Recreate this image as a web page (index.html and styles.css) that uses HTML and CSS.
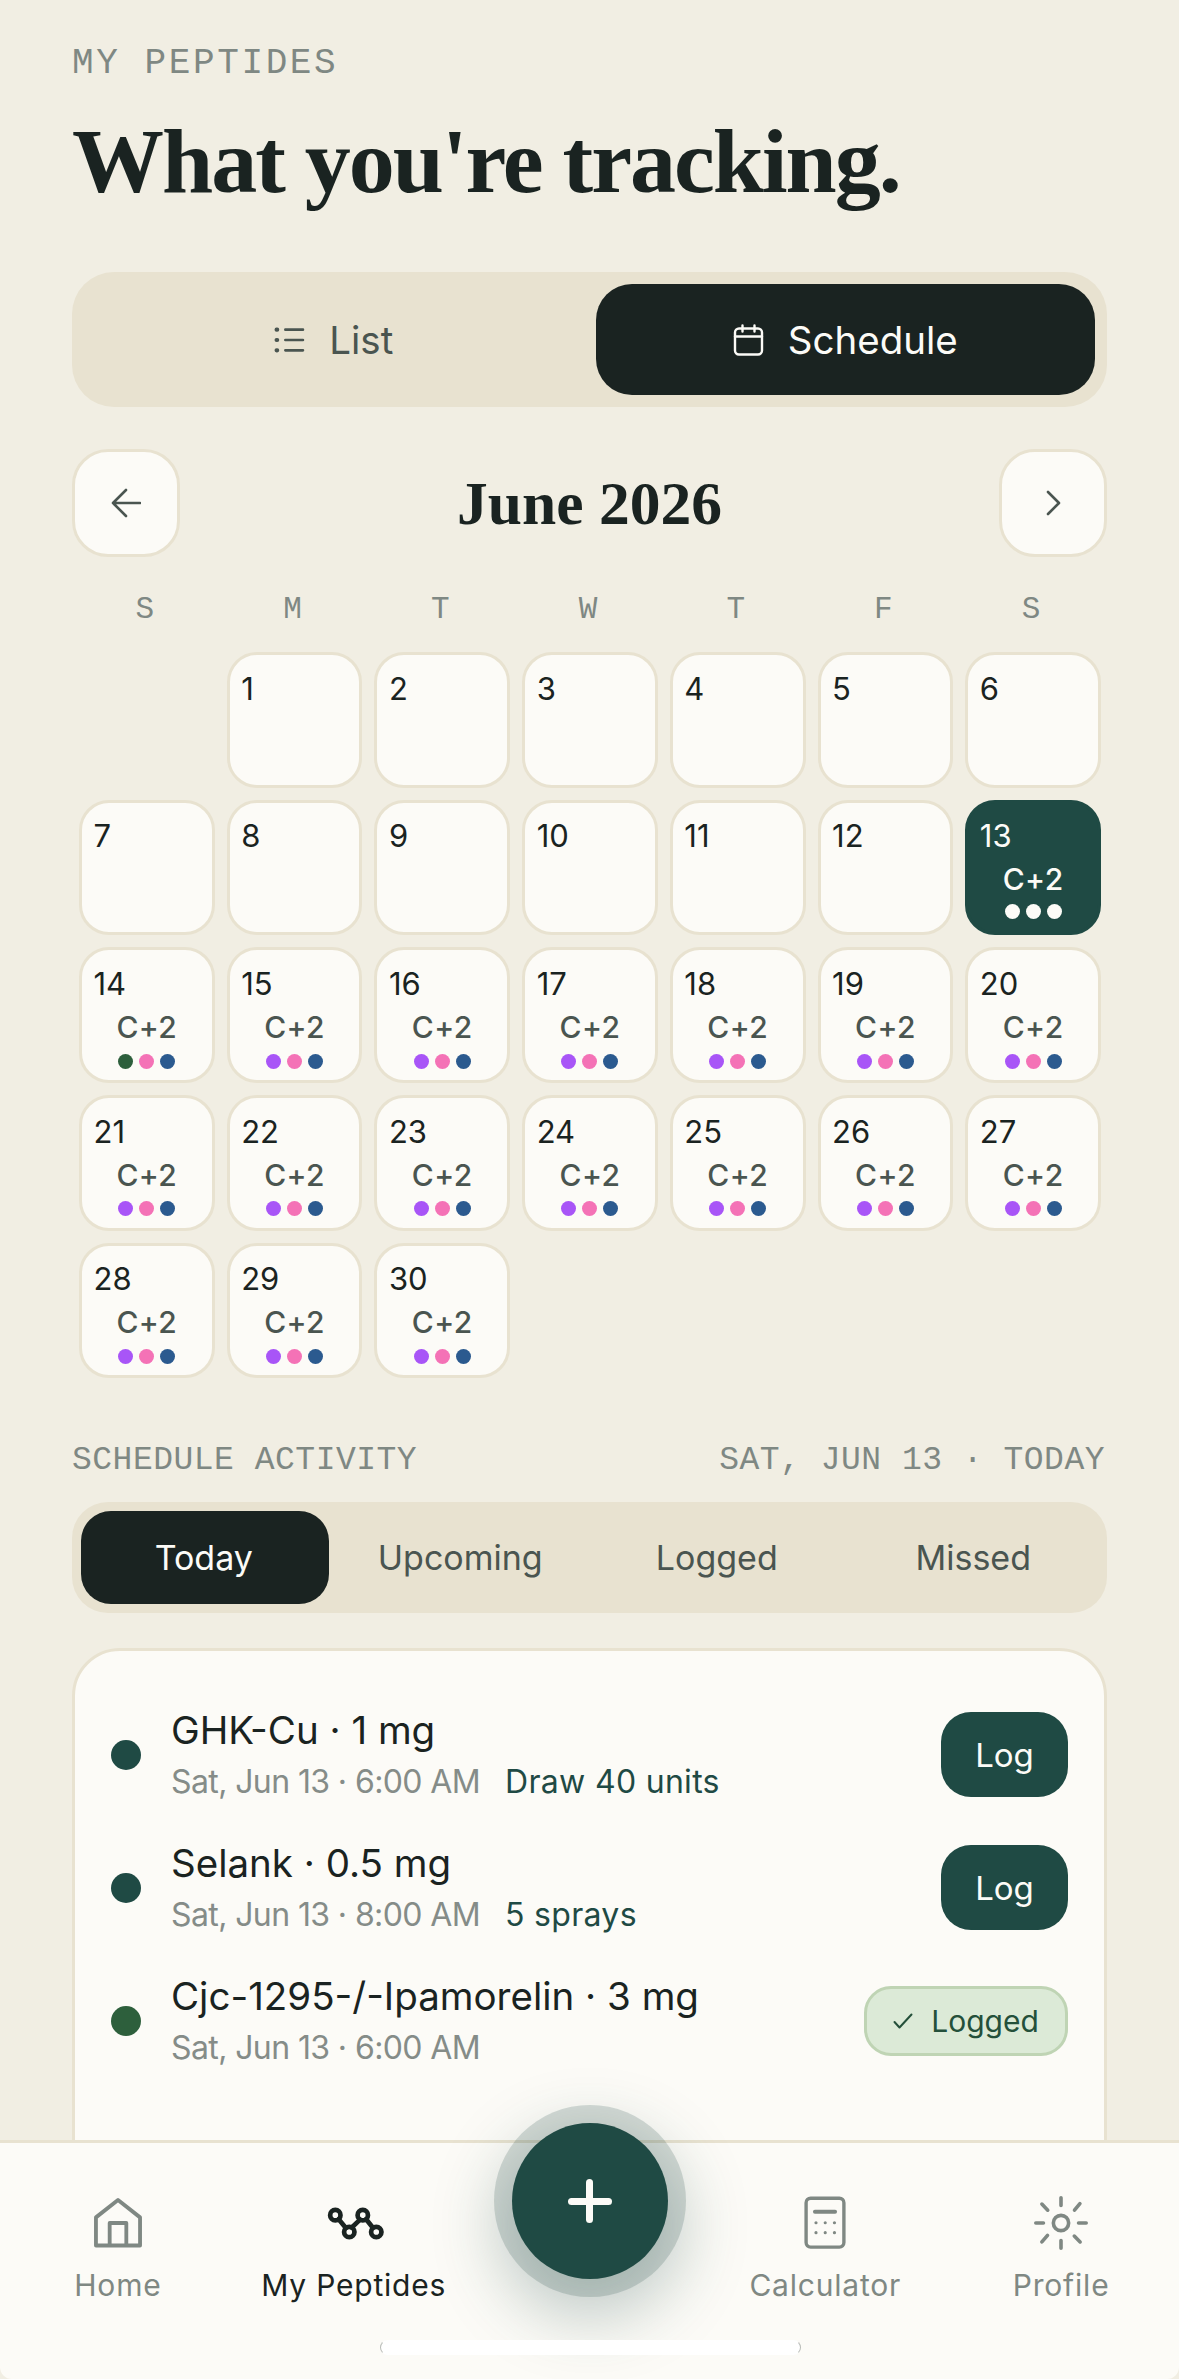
FILE: index.html
```html
<!DOCTYPE html>
<html lang="en">
<head>
<meta charset="utf-8">
<title>My Peptides</title>
<link rel="stylesheet" href="styles.css">
</head>
<body>
<div class="screen">
  <p class="eyebrow">MY PEPTIDES</p>
  <h1 class="title">What you're tracking.</h1>

  <div class="view-toggle">
    <div class="view-opt">
      <svg class="view-icon" viewBox="0 0 30 30" fill="none" stroke="currentColor" stroke-width="2.6" stroke-linecap="round"><path d="M11 5h17M11 15h17M11 25h17"/><path d="M2.5 5h.6M2.5 15h.6M2.5 25h.6" stroke-width="4"/></svg>
      <span>List</span>
    </div>
    <div class="view-opt is-active">
      <svg class="view-icon" viewBox="0 0 30 32" fill="none" stroke="currentColor" stroke-width="2.4" stroke-linecap="round" stroke-linejoin="round"><rect x="1.5" y="4.5" width="27" height="26" rx="4"/><path d="M1.5 12.5h27M9 1.5v6M21 1.5v6"/></svg>
      <span>Schedule</span>
    </div>
  </div>

  <div class="month-nav">
    <button class="nav-btn"><svg class="nav-svg" viewBox="0 0 30 30" fill="none" stroke="#4a5550" stroke-width="2.6" stroke-linecap="round" stroke-linejoin="round"><path d="M29 15H2M15 2 2 15l13 13"/></svg></button>
    <h2 class="month">June 2026</h2>
    <button class="nav-btn"><svg class="nav-svg" viewBox="0 0 30 30" fill="none" stroke="#4a5550" stroke-width="2.6" stroke-linecap="round" stroke-linejoin="round"><path d="m10 4 11 11-11 11"/></svg></button>
  </div>

  <div class="weekdays"><span>S</span><span>M</span><span>T</span><span>W</span><span>T</span><span>F</span><span>S</span></div>

  <div class="cal">
    <div class="blank"></div>
    <div class="day"><span class="num">1</span></div>
    <div class="day"><span class="num">2</span></div>
    <div class="day"><span class="num">3</span></div>
    <div class="day"><span class="num">4</span></div>
    <div class="day"><span class="num">5</span></div>
    <div class="day"><span class="num">6</span></div>
    <div class="day"><span class="num">7</span></div>
    <div class="day"><span class="num">8</span></div>
    <div class="day"><span class="num">9</span></div>
    <div class="day"><span class="num">10</span></div>
    <div class="day"><span class="num">11</span></div>
    <div class="day"><span class="num">12</span></div>
    <div class="day today"><span class="num">13</span><span class="count">C+2</span><span class="dots"><i class="w"></i><i class="w"></i><i class="w"></i></span></div>
    <div class="day"><span class="num">14</span><span class="count">C+2</span><span class="dots"><i class="g"></i><i class="k"></i><i class="b"></i></span></div>
    <div class="day"><span class="num">15</span><span class="count">C+2</span><span class="dots"><i class="p"></i><i class="k"></i><i class="b"></i></span></div>
    <div class="day"><span class="num">16</span><span class="count">C+2</span><span class="dots"><i class="p"></i><i class="k"></i><i class="b"></i></span></div>
    <div class="day"><span class="num">17</span><span class="count">C+2</span><span class="dots"><i class="p"></i><i class="k"></i><i class="b"></i></span></div>
    <div class="day"><span class="num">18</span><span class="count">C+2</span><span class="dots"><i class="p"></i><i class="k"></i><i class="b"></i></span></div>
    <div class="day"><span class="num">19</span><span class="count">C+2</span><span class="dots"><i class="p"></i><i class="k"></i><i class="b"></i></span></div>
    <div class="day"><span class="num">20</span><span class="count">C+2</span><span class="dots"><i class="p"></i><i class="k"></i><i class="b"></i></span></div>
    <div class="day"><span class="num">21</span><span class="count">C+2</span><span class="dots"><i class="p"></i><i class="k"></i><i class="b"></i></span></div>
    <div class="day"><span class="num">22</span><span class="count">C+2</span><span class="dots"><i class="p"></i><i class="k"></i><i class="b"></i></span></div>
    <div class="day"><span class="num">23</span><span class="count">C+2</span><span class="dots"><i class="p"></i><i class="k"></i><i class="b"></i></span></div>
    <div class="day"><span class="num">24</span><span class="count">C+2</span><span class="dots"><i class="p"></i><i class="k"></i><i class="b"></i></span></div>
    <div class="day"><span class="num">25</span><span class="count">C+2</span><span class="dots"><i class="p"></i><i class="k"></i><i class="b"></i></span></div>
    <div class="day"><span class="num">26</span><span class="count">C+2</span><span class="dots"><i class="p"></i><i class="k"></i><i class="b"></i></span></div>
    <div class="day"><span class="num">27</span><span class="count">C+2</span><span class="dots"><i class="p"></i><i class="k"></i><i class="b"></i></span></div>
    <div class="day"><span class="num">28</span><span class="count">C+2</span><span class="dots"><i class="p"></i><i class="k"></i><i class="b"></i></span></div>
    <div class="day"><span class="num">29</span><span class="count">C+2</span><span class="dots"><i class="p"></i><i class="k"></i><i class="b"></i></span></div>
    <div class="day"><span class="num">30</span><span class="count">C+2</span><span class="dots"><i class="p"></i><i class="k"></i><i class="b"></i></span></div>
  </div>

  <div class="section-head">
    <span>SCHEDULE ACTIVITY</span>
    <span>SAT, JUN 13 · TODAY</span>
  </div>

  <div class="tabs">
    <div class="tab is-active">Today</div>
    <div class="tab">Upcoming</div>
    <div class="tab">Logged</div>
    <div class="tab">Missed</div>
  </div>

  <div class="card">
    <div class="row">
      <span class="bullet"></span>
      <div class="row-text">
        <div class="row-title">GHK-Cu · 1 mg</div>
        <div class="row-sub"><span class="when">Sat, Jun 13 · 6:00 AM</span><span class="dose">Draw 40 units</span></div>
      </div>
      <div class="log-btn">Log</div>
    </div>
    <div class="row">
      <span class="bullet"></span>
      <div class="row-text">
        <div class="row-title">Selank · 0.5 mg</div>
        <div class="row-sub"><span class="when">Sat, Jun 13 · 8:00 AM</span><span class="dose">5 sprays</span></div>
      </div>
      <div class="log-btn">Log</div>
    </div>
    <div class="row">
      <span class="bullet done"></span>
      <div class="row-text">
        <div class="row-title">Cjc-1295-/-Ipamorelin · 3 mg</div>
        <div class="row-sub"><span class="when">Sat, Jun 13 · 6:00 AM</span></div>
      </div>
      <div class="logged-chip">
        <svg class="check" viewBox="0 0 20 16" fill="none" stroke="currentColor" stroke-width="2" stroke-linecap="round" stroke-linejoin="round"><path d="m1.5 9 5 5.500L18.500 1.500"/></svg>
        <span>Logged</span>
      </div>
    </div>
  </div>

  <nav class="tabbar">
    <div class="tabitem">
      <svg class="tabicon" viewBox="0 0 24 24" fill="none" stroke="currentColor" stroke-width="1.7" stroke-linejoin="round"><path d="M2.200 9.500 12 1.800l9.800 7.700V22H2.200z"/><path d="M8.300 22V12h7.400v10"/></svg>
      <span>Home</span>
    </div>
    <div class="tabitem is-current">
      <svg class="tabicon" viewBox="0 0 24 24" fill="none" stroke="currentColor" stroke-width="2.100" stroke-linecap="round"><circle cx="3.700" cy="8.500" r="2.300"/><circle cx="9.900" cy="16" r="2.300"/><circle cx="15.900" cy="8.500" r="2.300"/><circle cx="21.900" cy="16" r="2.300"/><path d="m5.200 10.300 3.200 3.900M11 14l3.700-3.500M17.400 10.300l3 3.800"/></svg>
      <span>My Peptides</span>
    </div>
    <div class="tabgap"></div>
    <div class="tabitem">
      <svg class="tabicon" viewBox="0 0 24 24" fill="none" stroke="currentColor" stroke-width="1.500" stroke-linecap="round"><rect x="3.600" y="1" width="16.800" height="21.700" rx="2"/><path d="M7.500 7h9" stroke-width="1.700"/><g fill="currentColor" stroke="none"><circle cx="8" cy="11.900" r=".7"/><circle cx="12.100" cy="11.900" r=".7"/><circle cx="16.200" cy="11.900" r=".7"/><circle cx="8" cy="16.300" r=".7"/><circle cx="12.100" cy="16.300" r=".7"/><circle cx="16.200" cy="16.300" r=".7"/></g></svg>
      <span>Calculator</span>
    </div>
    <div class="tabitem">
      <svg class="tabicon" viewBox="0 0 24 24" fill="none" stroke="currentColor" stroke-width="1.600" stroke-linecap="round"><circle cx="12" cy="12" r="3.400"/><path d="M12 .8v3.400M12 19.800v3.400M.8 12h3.400M19.800 12h3.400M3.500 3.600l2.600 2.700M17.900 17.800l2.600 2.600M3.500 20.400l2.500-2.900M18 6.300l2.400-2.900"/></svg>
      <span>Profile</span>
    </div>
    <button class="fab"><span class="fab-plus"></span></button>
    <div class="home-bar"></div>
  </nav>
</div>
</body>
</html>
```

FILE: styles.css
```css
* { box-sizing: border-box; }
html, body { margin: 0; padding: 0; }
body { background: #f1eee3; font-family: Inter, "Noto Sans", sans-serif; color: #1a2321; }

.screen { position: relative; width: 1179px; height: 2379px; overflow: hidden; padding: 44px 72px 0 72px; background: #f1eee3; }

.eyebrow { margin: 0; font: 400 36px/40px "Liberation Mono", monospace; letter-spacing: 2.6px; color: #7f8883; }
.title { margin: 27px 0 0; font: 700 92px/100px "Liberation Serif", serif; letter-spacing: -2px; color: #1a2321; }

.view-toggle { margin-top: 61px; height: 135px; padding: 12px; border-radius: 42px; background: #e8e2d0; display: grid; grid-template-columns: 1fr 1fr; gap: 12px; }
.view-opt { display: flex; align-items: center; justify-content: center; gap: 24px; border-radius: 36px; font-size: 38.500px; color: #4a5550; }
.view-opt.is-active { background: #1a2321; color: #fcfbf7; }
.view-icon { width: 31px; height: 32px; }

.month-nav { margin-top: 42px; height: 108px; display: flex; align-items: center; justify-content: space-between; }
.nav-btn { width: 108px; height: 108px; padding: 0; border: 3px solid #e8e2d0; border-radius: 36px; background: #fcfbf7; display: flex; align-items: center; justify-content: center; }
.nav-svg { width: 30px; height: 30px; }
.month { margin: 0; font: 700 61.500px/70px "Liberation Serif", serif; color: #1a2321; }

.weekdays { margin-top: 38px; padding: 0 8px 0 5px; display: grid; grid-template-columns: repeat(7, 1fr); gap: 12px; font: 400 31px/30px "Liberation Mono", monospace; color: #7f8883; text-align: center; }

.cal { margin-top: 27px; padding: 0 6px 0 7px; display: grid; grid-template-columns: repeat(7, 1fr); grid-auto-rows: 135.700px; gap: 12px; }
.day { padding: 15.500px 11.500px; border: 3px solid #e8e2d0; border-radius: 30px; background: #fcfbf7; display: flex; flex-direction: column; align-items: flex-start; }
.num { font-size: 31px; line-height: 36px; color: #1a2321; }
.count { align-self: center; margin-top: 10px; font-size: 30px; font-weight: 500; line-height: 30px; letter-spacing: .4px; color: #4a5550; }
.dots { align-self: center; margin-top: 11.800px; display: flex; gap: 6px; }
.dots i { width: 15px; height: 15px; border-radius: 50%; }
.dots .p { background: #a855f7; }
.dots .k { background: #f472b6; }
.dots .b { background: #2b5a8f; }
.dots .g { background: #2d5f3c; }
.dots .w { background: #fcfbf7; }
.day.today { border-color: #1f4a44; background: #1f4a44; }
.today .num, .today .count { color: #fcfbf7; }
.today .dots { margin-top: 9.500px; }

.section-head { margin-top: 63px; padding-right: 2px; display: flex; justify-content: space-between; font: 400 33px/40px "Liberation Mono", monospace; letter-spacing: .5px; color: #7f8883; }

.tabs { margin-top: 21px; height: 111px; padding: 9px; border-radius: 36px; background: #e8e2d0; display: grid; grid-template-columns: repeat(4, 1fr); gap: 9px; }
.tab { padding-right: 2px; display: flex; align-items: center; justify-content: center; border-radius: 30px; font-size: 34px; color: #4a5550; }
.tab.is-active { background: #1a2321; color: #fcfbf7; }

.card { margin-top: 35px; height: 560px; padding: 55px 36px 0; border: 3px solid #e8e2d0; border-radius: 48px; background: #fcfbf7; display: flex; flex-direction: column; gap: 36px; }
.row { display: flex; align-items: center; gap: 30px; }
.bullet { width: 30px; height: 30px; border-radius: 50%; background: #1f4a44; flex: none; }
.bullet.done { background: #2d5f3c; }
.row-text { flex: 1; min-width: 0; }
.row-title { font-size: 38.500px; line-height: 48px; color: #1a2321; }
.row-sub { margin-top: 7px; display: flex; gap: 25px; font-size: 32px; line-height: 42px; color: #858c88; }
.when { letter-spacing: -.6px; }
.dose { color: #1f4a44; letter-spacing: .3px; }
.log-btn { width: 127px; height: 85px; border-radius: 30px; background: #1f4a44; color: #fcfbf7; font-size: 33px; display: flex; align-items: center; justify-content: center; }
.logged-chip { width: 204px; height: 70px; border: 3px solid #bfd4b4; border-radius: 27px; background: #dcead7; color: #24503a; font-size: 30px; display: flex; align-items: center; justify-content: center; gap: 18px; }
.check { width: 20px; height: 16px; }

.tabbar { position: absolute; left: 0; right: 0; bottom: 0; height: 239px; padding-top: 53px; border-top: 3px solid #e8e2d0; border-radius: 0 0 12px 12px; background: #fcfbf7; display: grid; grid-template-columns: repeat(5, 1fr); align-items: start; }
.tabitem { display: flex; flex-direction: column; align-items: center; gap: 15px; color: #7f8883; font-size: 30px; line-height: 40px; letter-spacing: .8px; }
.tabitem.is-current { color: #1a2321; }
.tabicon { width: 54px; height: 54px; overflow: visible; }

.fab { position: absolute; left: 511.500px; top: -20px; width: 156px; height: 156px; padding: 0; border: none; border-radius: 50%; background: #1f4a44; box-shadow: 0 0 0 18px rgba(31, 74, 68, .18), 0 24px 64px 16px rgba(31, 74, 68, .26); }
.fab-plus { position: absolute; left: 56px; top: 74.500px; width: 44px; height: 7px; border-radius: 4px; background: #fcfbf7; }
.fab-plus::after { content: ""; position: absolute; left: 18.500px; top: -18.500px; width: 7px; height: 44px; border-radius: 4px; background: #fcfbf7; }

.home-bar { position: absolute; left: 380px; top: 197px; width: 421px; height: 15px; border: 1px solid transparent; border-left-color: #b9bcb8; border-right-color: #b9bcb8; border-radius: 8px; background: #fff; }
```
